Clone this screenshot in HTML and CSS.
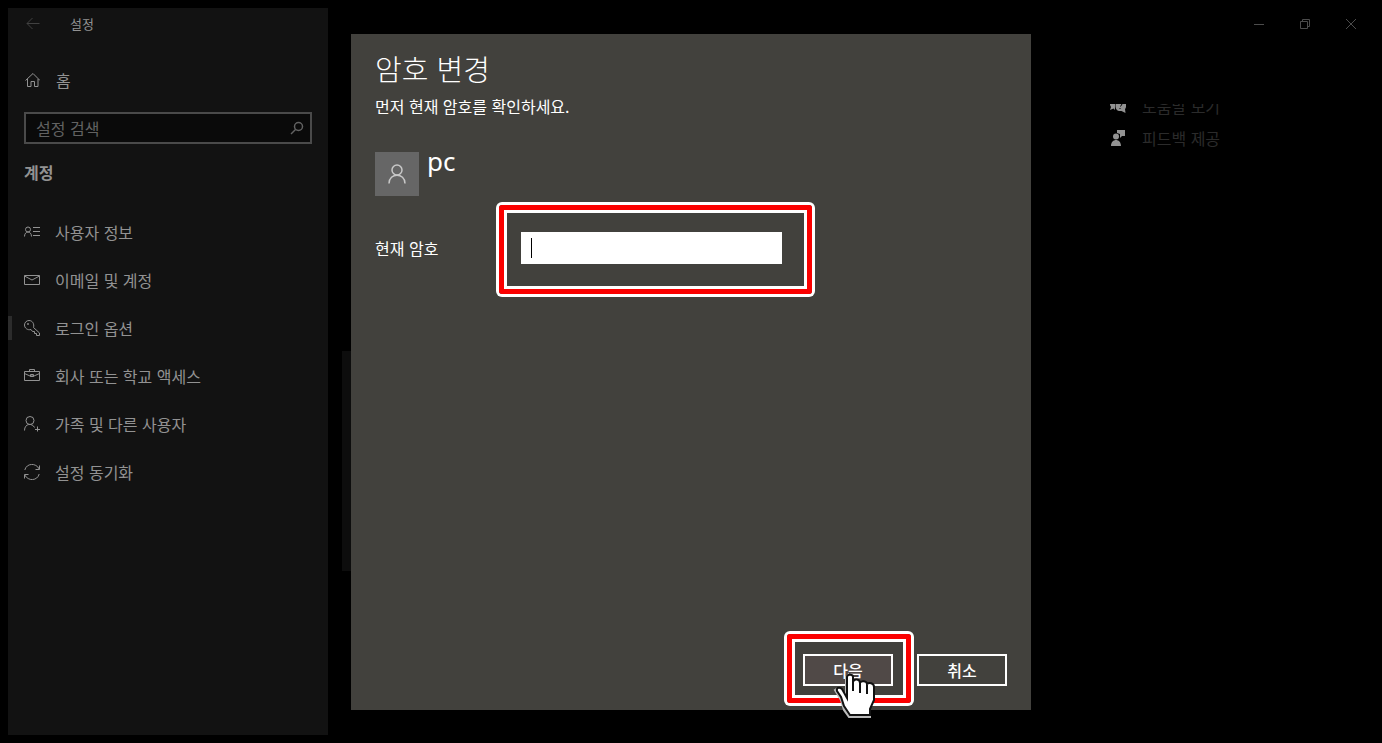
FILE: index.html
```html
<!DOCTYPE html>
<html lang="ko">
<head>
  <meta charset="UTF-8">
  <title>설정</title>
  <link rel="stylesheet" href="styles.css">
</head>
<body>

  <div class="window">
    <aside class="sidebar">
      <div class="titlebar">
        <button class="back" aria-label="뒤로">
          <svg width="14" height="14" viewBox="0 0 14 14"><path d="M13.5 6.500H1M6.500 1L1 6.500l5.500 5.500"/></svg>
        </button>
        <span>설정</span>
      </div>

      <a class="home" href="#">
        <svg width="16" height="16" viewBox="0 0 16 16"><path d="M1.500 8.500L9 1.500L16 8.500M3.500 7v7.500h3.500V9.500h3.500v5h3.500V7"/></svg>
        홈
      </a>

      <div class="search">
        <input type="text" placeholder="설정 검색" aria-label="설정 검색">
        <svg width="14" height="14" viewBox="0 0 14 14"><circle cx="8.500" cy="5.500" r="4"/><path d="M5.500 8.500L1 13"/></svg>
      </div>

      <h2>계정</h2>

      <nav>
        <a href="#">
          <svg width="16" height="16" viewBox="0 0 16 16"><circle cx="4" cy="5.500" r="2.500"/><path d="M.5 12.500c0-6 7-6 7 0M9 3.500h7M9 7.500h7M9 11.500h7"/></svg>
          사용자 정보
        </a>
        <a href="#">
          <svg width="16" height="16" viewBox="0 0 16 16"><path d="M.5 3.500h15v9H.5zM.5 4l7.500 4L15.500 4"/></svg>
          이메일 및 계정
        </a>
        <a href="#" class="active">
          <svg width="16" height="16" viewBox="0 0 16 16"><path d="M9.500 7.500L15.500 13v2.500h-3V13.500h-2v-2h-2L7 9.500C3.500 10.500.5 8 .5 5A4.500 4.500 0 0 1 5 .5c3.500 0 5.500 3.500 4.500 7z"/><circle cx="4" cy="4" r=".6"/></svg>
          로그인 옵션
        </a>
        <a href="#">
          <svg width="16" height="16" viewBox="0 0 16 16"><path d="M.5 3.500h15v9H.5zM5.500 3.500v-2h5v2M.5 5.500l5.500 2.500h4l5.500-2.500M6.500 6.500h3v2h-3z"/></svg>
          회사 또는 학교 액세스
        </a>
        <a href="#">
          <svg width="16" height="16" viewBox="0 0 16 16"><circle cx="6" cy="4.500" r="4"/><path d="M.5 14.500c0-7.500 8-7.500 10-3M13.500 10.500v5M11 13.500h5"/></svg>
          가족 및 다른 사용자
        </a>
        <a href="#">
          <svg width="16" height="16" viewBox="0 0 16 16"><path d="M.8 6C2.500-1 12-1.500 15.200 5M15.500 1.500v4h-4M15.200 10C13.500 17 4 17.500.8 11M.5 14.500v-4h4"/></svg>
          설정 동기화
        </a>
      </nav>
    </aside>

    <main class="main">
      <div class="controls">
        <button aria-label="최소화"><svg width="10" height="10" viewBox="0 0 10 10"><path d="M0 5.500h10"/></svg></button>
        <button aria-label="이전 크기로 복원"><svg width="10" height="10" viewBox="0 0 10 10"><path d="M.5 2.500h7v7h-7zM2.500 2.500v-2h7v7h-2"/></svg></button>
        <button aria-label="닫기"><svg width="10" height="10" viewBox="0 0 10 10"><path d="M0 0l10 10M10 0L0 10"/></svg></button>
      </div>
      <div class="content">
        <div class="panel"></div>
        <div class="links">
          <a href="#">
            <svg width="16" height="16" viewBox="0 0 16 16"><path d="M0 2h7L5 6v6L3.500 10.500L0 12l1-3L0 7z"/><path d="M10.500 2C17 2 17 9 15 11l.5 4-4-2C7 13.500 5.500 11 5.500 7.500S7.500 2 10.500 2z"/><path class="mark" d="M9 6c0-2.500 4-2.500 3 0l-1.500 2.500M10 10v1"/></svg>
            도움말 보기
          </a>
          <a href="#">
            <svg width="16" height="16" viewBox="0 0 16 16"><circle cx="6" cy="6.500" r="3"/><path d="M1 16c0-8 10-8 10 0zM7 0h8v6h-3l-2 2V4L7 3z"/></svg>
            피드백 제공
          </a>
        </div>
      </div>
    </main>
  </div>

  <div class="overlay">
    <form class="dialog" role="dialog" aria-labelledby="dialog-title">
      <h1 id="dialog-title">암호 변경</h1>
      <p>먼저 현재 암호를 확인하세요.</p>

      <div class="user">
        <div class="avatar">
          <svg width="20" height="20" viewBox="0 0 20 20"><circle cx="10" cy="6" r="5"/><path d="M2 19.500c0-11 16-11 16 0"/></svg>
        </div>
        <span class="user-name">pc</span>
      </div>

      <div class="field">
        <label for="password">현재 암호</label>
        <div class="input-wrap">
          <input type="password" id="password">
          <span class="caret"></span>
          <span class="ring ring-input"></span>
        </div>
      </div>

      <div class="actions">
        <div class="next-wrap">
          <button type="button" class="next">다음</button>
          <span class="ring ring-next"></span>
          <svg class="cursor" width="44" height="46" viewBox="0 0 44 46">
            <path class="cursor-shadow" d="M2 18l3-2 8 9V5l2-2v23l3 17h19v2H16l-5-7-3-10z"/>
            <path class="cursor-hand" d="M14 26V5c0-3 6-3 6 0v5c1-4 7-3 7 1 1-3 7-2 7 1 2-2 7-1 7 3v13l-4 9v6H17l-6-9-3-9-4-6c-1-4 3-4 5-2z"/>
            <path class="cursor-line" d="M20 9v10M27 11v10M34 13v9"/>
          </svg>
        </div>
        <button type="button">취소</button>
      </div>
    </form>
  </div>

</body>
</html>
```
FILE: styles.css
```css
:root {
  --sidebar: #121212;
  --text-dim: #929292;
  --dialog: #42413d;
  --red: #fb0000;
}

* {
  box-sizing: border-box;
}

body {
  margin: 0;
  background: #000;
  color: var(--text-dim);
  font-family: "Noto Sans CJK KR", sans-serif;
  font-size: 16px;
  line-height: 24px;
}

a {
  color: inherit;
  text-decoration: none;
}

button,
input {
  font: inherit;
  color: inherit;
}

svg {
  display: block;
  flex: none;
  fill: none;
  stroke: currentColor;
}

.window {
  display: flex;
  min-height: 100vh;
  padding: 8px;
}

/* sidebar */
.sidebar {
  width: 320px;
  padding: 0 16px;
  background: var(--sidebar);
}

.titlebar {
  display: flex;
  align-items: center;
  gap: 30px;
  height: 32px;
  font-size: 13px;
}

.back {
  padding: 0 0 0 2px;
  border: none;
  background: none;
  color: #414141;
}

.home {
  display: flex;
  align-items: center;
  gap: 16px;
  height: 48px;
  margin-top: 16px;
}

.search {
  display: flex;
  align-items: center;
  height: 32px;
  margin-top: 8px;
  padding: 0 6px 0 10px;
  border: 2px solid #4a4a4a;
  background: #0a0a0a;
  color: #626262;
}

.search input {
  flex: 1;
  min-width: 0;
  height: 24px;
  padding: 0;
  border: none;
  outline: none;
  background: none;
}

.search input::placeholder {
  color: #626262;
}

.search svg {
  stroke-width: 1.5;
}

.sidebar h2 {
  margin: 16px 0 24px;
  font-size: 16px;
  font-weight: 700;
}

nav a {
  display: flex;
  align-items: center;
  gap: 15px;
  height: 48px;
  margin: 0 -16px;
  padding: 0 16px;
}

nav .active {
  background: linear-gradient(#2c2c2c, #2c2c2c) no-repeat left center / 4px 24px;
}

/* page behind the dialog */
.main {
  flex: 1;
}

.controls {
  display: flex;
  justify-content: flex-end;
  height: 32px;
  color: #4c4c4c;
}

.controls button {
  display: grid;
  place-items: center;
  width: 46px;
  padding: 0;
  border: none;
  background: none;
}

.content {
  display: grid;
  grid-template-columns: 1fr 264px;
  margin-top: 64px;
  overflow: hidden;
}

.panel {
  width: 50%;
  height: 220px;
  margin: 247px 0 0 14px;
  background: #0d0d0d;
}

.links {
  margin-top: -14px;
  color: #2b2b2b;
}

.links a {
  display: flex;
  align-items: center;
  gap: 16px;
  height: 32px;
}

.links svg {
  fill: #929292;
  stroke: none;
}

.links .mark {
  fill: none;
  stroke: #000;
}

/* dialog */
.overlay {
  position: fixed;
  inset: 0;
  display: flex;
  justify-content: center;
  padding: 34px 0 33px;
}

.dialog {
  display: flex;
  flex-direction: column;
  width: 680px;
  padding: 14px 24px 24px;
  background: var(--dialog);
  color: #fff;
}

.dialog h1 {
  margin: 0;
  font-size: 29px;
  font-weight: 300;
  line-height: 40px;
}

.dialog p {
  margin: 6px 0 34px;
}

.user {
  display: flex;
  gap: 8px;
}

.avatar {
  display: grid;
  place-items: center;
  width: 44px;
  height: 44px;
  background: #666;
  color: #c8c8c8;
}

.avatar svg {
  stroke-width: 1.5;
}

.user-name {
  font-family: "Noto Sans", sans-serif;
  font-size: 26px;
  line-height: 18px;
}

.field {
  display: flex;
  align-items: center;
  margin-top: 36px;
}

.field label {
  width: 146px;
}

.input-wrap,
.next-wrap {
  position: relative;
}

.input-wrap input {
  display: block;
  width: 261px;
  height: 32px;
  padding: 0 10px;
  border: none;
  outline: none;
  background: #fff;
  color: #000;
}

.caret {
  position: absolute;
  top: 6px;
  left: 10px;
  width: 1px;
  height: 20px;
  background: #000;
}

.ring {
  position: absolute;
  border: 5px solid var(--red);
  border-radius: 3px;
  box-shadow: 0 0 0 3px #fff, inset 0 0 0 3px #fff;
  pointer-events: none;
}

.ring-input {
  inset: -27px -30px -30px -22px;
}

.ring-next {
  inset: -20px -18px -17px -16px;
}

.actions {
  display: flex;
  justify-content: flex-end;
  gap: 24px;
  margin-top: auto;
}

.actions button {
  display: block;
  width: 90px;
  height: 32px;
  padding: 0;
  border: 2px solid #fff;
  background: none;
  font-weight: 500;
}

.actions .next {
  background: #504947;
}

.cursor {
  position: absolute;
  top: 18px;
  left: 30px;
}

.cursor-shadow {
  fill: #bbb;
  stroke: #bbb;
  stroke-width: 2;
}

.cursor-hand {
  fill: #fff;
  stroke: #111;
  stroke-width: 2;
}

.cursor-line {
  stroke: #111;
  stroke-width: 2;
}
```
